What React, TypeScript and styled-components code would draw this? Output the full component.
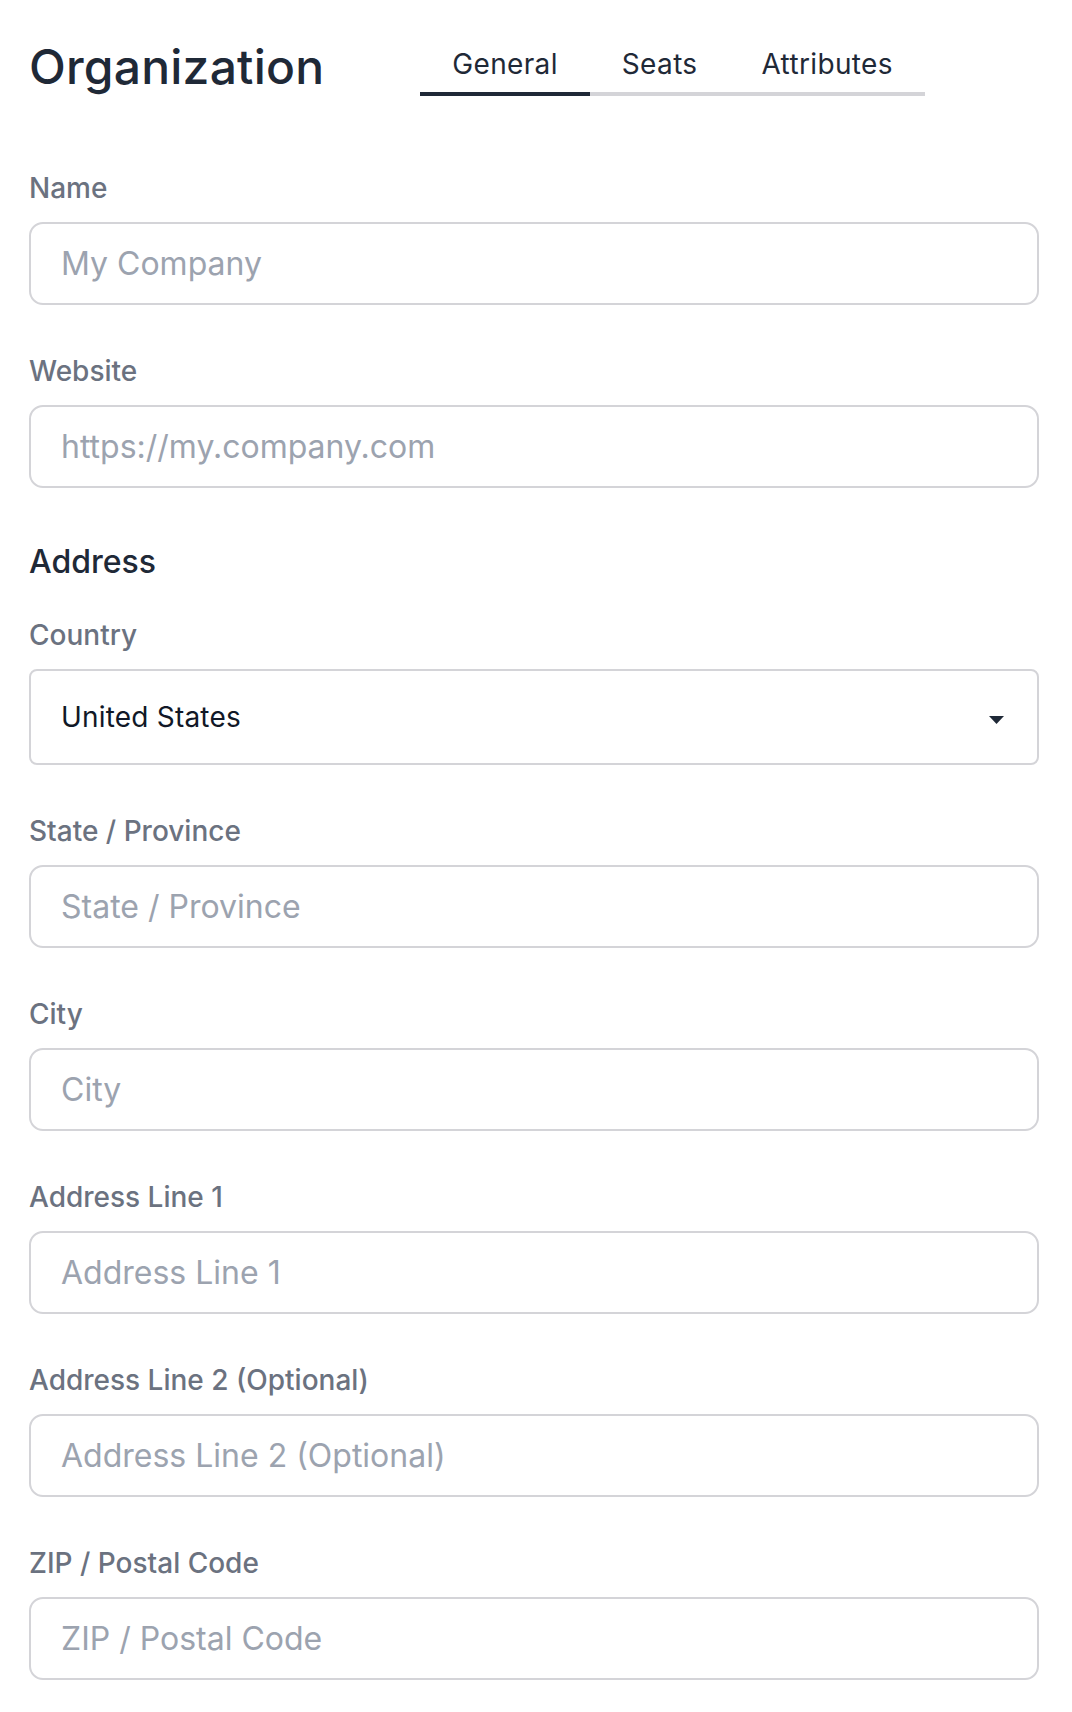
import styled, { createGlobalStyle } from "styled-components";

const GlobalStyle = createGlobalStyle`
	* {
		box-sizing: border-box;
	}
	body {
		margin: 0;
		background: #ffffff;
		font-family: Inter, "Noto Sans", sans-serif;
		color: #1f2937;
	}
`;

const Page = styled.div`
	padding: 38px 33px 33px 29px;
`;

const Header = styled.header`
	display: flex;
	align-items: flex-end;
	gap: 96px;
`;

const Title = styled.h1`
	margin: 0;
	font-size: 48px;
	line-height: 58px;
	font-weight: 500;
	color: #1f2937;
	letter-spacing: 0.2px;
`;

const TabList = styled.nav`
	display: flex;
	box-shadow: inset 0 -4px 0 #d4d4d8;
`;

const Tab = styled.button<{ $active?: boolean }>`
	border: none;
	background: none;
	margin: 0;
	padding: 0 32px 8px;
	font-family: Inter, "Noto Sans", sans-serif;
	font-size: 28px;
	line-height: 40px;
	font-weight: 400;
	letter-spacing: 0.35px;
	color: #1f2937;
	border-bottom: 4px solid ${p => (p.$active ? "#1f2937" : "transparent")};
	cursor: pointer;
`;

const Form = styled.form`
	display: flex;
	flex-direction: column;
	gap: 48px;
	margin-top: 74px;
`;

const Field = styled.div`
	display: flex;
	flex-direction: column;
	gap: 16px;
`;

const Label = styled.label`
	font-size: 28px;
	line-height: 36px;
	font-weight: 500;
	color: #6b7280;
`;

const Input = styled.input`
	width: 100%;
	height: 83px;
	padding: 0 30px;
	border: 2px solid #d4d4d8;
	border-radius: 14px;
	font-family: Inter, "Noto Sans", sans-serif;
	font-size: 32px;
	color: #1f2937;
	background: #ffffff;
	outline: none;
	&::placeholder {
		color: #9ca3af;
	}
`;

const Section = styled.section`
	display: flex;
	flex-direction: column;
	margin-top: 6px;
`;

const SectionTitle = styled.h2`
	margin: 0 0 35px;
	font-size: 32px;
	line-height: 40px;
	font-weight: 500;
	color: #1f2937;
`;

const FieldList = styled.div`
	display: flex;
	flex-direction: column;
	gap: 48px;
`;

const SelectWrap = styled.div`
	position: relative;
`;

const Select = styled.select`
	width: 100%;
	height: 96px;
	padding: 0 80px 0 30px;
	border: 2px solid #d4d4d8;
	border-radius: 8px;
	appearance: none;
	background: #ffffff;
	font-family: Inter, "Noto Sans", sans-serif;
	font-size: 28px;
	letter-spacing: 0.2px;
	color: #111827;
	outline: none;
`;

const Caret = styled.svg`
	position: absolute;
	right: 35px;
	top: 50%;
	margin-top: -1px;
	width: 15px;
	height: 8px;
	pointer-events: none;
`;

const fields = [
	{ label: "State / Province", placeholder: "State / Province" },
	{ label: "City", placeholder: "City" },
	{ label: "Address Line 1", placeholder: "Address Line 1" },
	{ label: "Address Line 2 (Optional)", placeholder: "Address Line 2 (Optional)" },
	{ label: "ZIP / Postal Code", placeholder: "ZIP / Postal Code" },
];

function App() {
	return (
		<Page>
			<GlobalStyle />
			<Header>
				<Title>Organization</Title>
				<TabList>
					<Tab type="button" $active>
						General
					</Tab>
					<Tab type="button">Seats</Tab>
					<Tab type="button">Attributes</Tab>
				</TabList>
			</Header>
			<Form onSubmit={e => e.preventDefault()}>
				<Field>
					<Label>Name</Label>
					<Input placeholder="My Company" />
				</Field>
				<Field>
					<Label>Website</Label>
					<Input placeholder="https://my.company.com" />
				</Field>
				<Section>
					<SectionTitle>Address</SectionTitle>
					<FieldList>
						<Field>
							<Label>Country</Label>
							<SelectWrap>
								<Select defaultValue="US">
									<option value="US">United States</option>
									<option value="CA">Canada</option>
									<option value="GB">United Kingdom</option>
								</Select>
								<Caret viewBox="0 0 15 8">
									<path d="M0 0h15L7.5 8z" fill="#1f2937" />
								</Caret>
							</SelectWrap>
						</Field>
						{fields.map(f => (
							<Field key={f.label}>
								<Label>{f.label}</Label>
								<Input placeholder={f.placeholder} />
							</Field>
						))}
					</FieldList>
				</Section>
			</Form>
		</Page>
	);
}

export default App;
